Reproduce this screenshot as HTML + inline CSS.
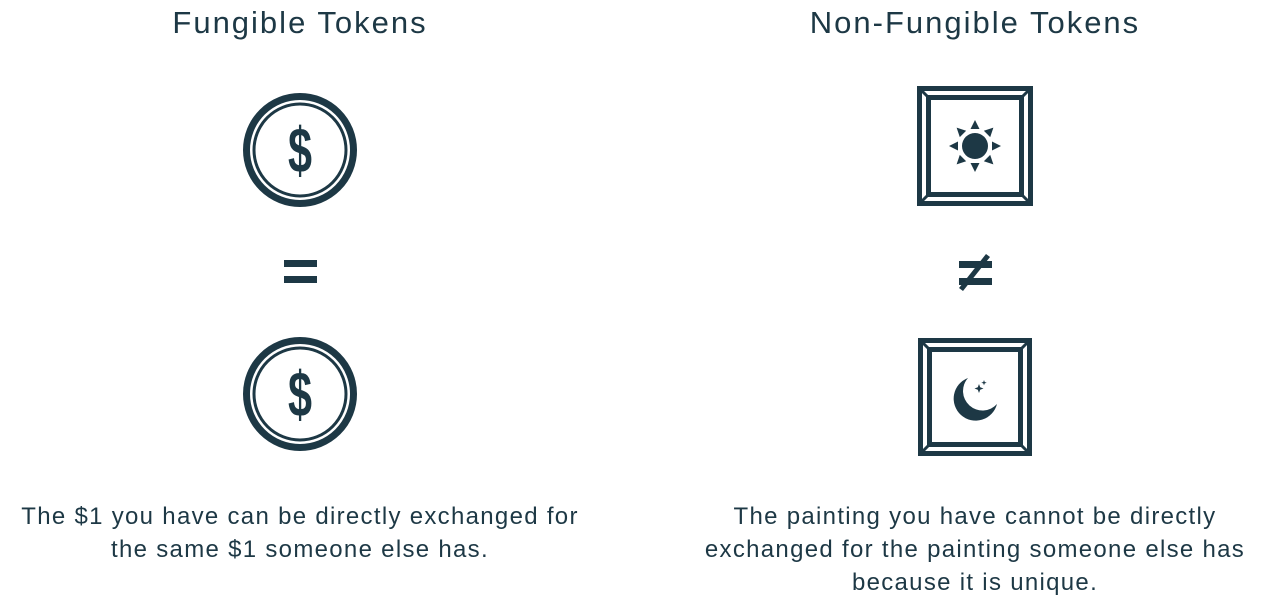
<!DOCTYPE html>
<html><head><style>
body{margin:0;width:1275px;height:599px;background:#fff;color:#1d3845;font-family:"Liberation Sans",sans-serif;position:relative;overflow:hidden}
.t{position:absolute;width:640px;text-align:center;font-size:31px;top:5px;letter-spacing:2px}
.p{position:absolute;text-align:center;font-size:24px;line-height:33px;top:500px;letter-spacing:1.3px}
svg{position:absolute;left:0;top:0}
</style></head><body>
<div class="t" style="left:-20px">Fungible Tokens</div>
<div class="t" style="left:655px">Non-Fungible Tokens</div>
<svg width="1275" height="599">
<g fill="none" stroke="#1d3845">
<circle cx="300" cy="150" r="53.5" stroke-width="7"/>
<circle cx="300" cy="150" r="46" stroke-width="3"/>
<circle cx="300" cy="394" r="53.5" stroke-width="7"/>
<circle cx="300" cy="394" r="46" stroke-width="3"/>
<rect x="919.5" y="88.5" width="111" height="115" stroke-width="5"/>
<rect x="928.5" y="97.5" width="93" height="97" stroke-width="5"/>
<path d="M920 89L929 98M1030 89L1021 98M920 203L929 194M1030 203L1021 194" stroke-width="3"/>
<rect x="920.5" y="340.5" width="109" height="113" stroke-width="5"/>
<rect x="929.5" y="349.5" width="91" height="95" stroke-width="5"/>
<path d="M921 341L930 350M1029 341L1020 350M921 453L930 444M1029 453L1020 444" stroke-width="3"/>
</g>
<g fill="#1d3845">
<text x="300" y="172" text-anchor="middle" font-size="64" font-weight="bold" font-family="Liberation Sans Narrow,Liberation Sans,sans-serif" textLength="24" lengthAdjust="spacingAndGlyphs">$</text>
<text x="300" y="416" text-anchor="middle" font-size="64" font-weight="bold" font-family="Liberation Sans Narrow,Liberation Sans,sans-serif" textLength="24" lengthAdjust="spacingAndGlyphs">$</text>
<rect x="284" y="260" width="33" height="7"/><rect x="284" y="276" width="33" height="7"/>
<rect x="959" y="261" width="33" height="7"/><rect x="959" y="278" width="33" height="7"/>
<path d="M986 254L990 257L963 291L959 288Z"/>
<circle cx="975" cy="146" r="13"/>
<g transform="translate(975 146)">
<path id="ray" d="M-4.5 -17L4.5 -17L0 -26Z"/>
<use href="#ray" transform="rotate(45)"/><use href="#ray" transform="rotate(90)"/><use href="#ray" transform="rotate(135)"/><use href="#ray" transform="rotate(180)"/><use href="#ray" transform="rotate(225)"/><use href="#ray" transform="rotate(270)"/><use href="#ray" transform="rotate(315)"/>
</g>
<path d="M968 378A22 22 0 1 0 997 404A18 18 0 1 1 968 378Z"/>
<path d="M979 384l1.2 3.3 3.3 1.2-3.3 1.2-1.2 3.3-1.2-3.3-3.3-1.2 3.3-1.2Z"/>
<path d="M984 380l.7 2 2 .7-2 .7-.7 2-.7-2-2-.7 2-.7Z"/>
</g>
</svg>
<div class="p" style="left:0;width:600px">The $1 you have can be directly exchanged for<br>the same $1 someone else has.</div>
<div class="p" style="left:675px;width:600px">The painting you have cannot be directly<br>exchanged for the painting someone else has<br>because it is unique.</div>
</body></html>
